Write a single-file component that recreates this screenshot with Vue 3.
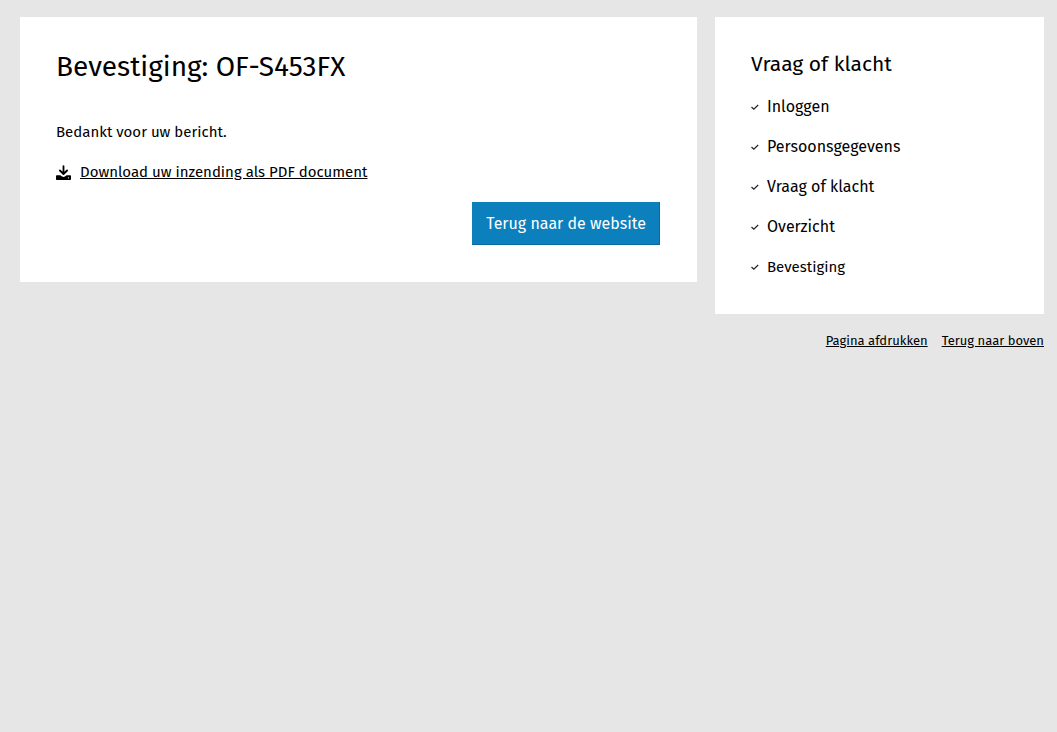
<script setup>
const steps = [
  { label: 'Inloggen' },
  { label: 'Persoonsgegevens' },
  { label: 'Vraag of klacht' },
  { label: 'Overzicht' },
  { label: 'Bevestiging', current: true },
]
</script>

<template>
  <div class="page">
    <main class="card">
      <h1 class="title">Bevestiging: OF-S453FX</h1>
      <p class="message">Bedankt voor uw bericht.</p>
      <div class="download">
        <svg class="download-icon" viewBox="0 0 15 15" aria-hidden="true">
          <path d="M7.5 1.200v7.200M3.900 5.500l3.600 3.500 3.600-3.500" fill="none" stroke="#000" stroke-width="1.800" stroke-linecap="round" stroke-linejoin="round" />
          <path d="M1 10.200h3.300l1.800 1.300c.9.600 1.900.6 2.800 0l1.800-1.300H14c.6 0 1 .4 1 1V14c0 .6-.4 1-1 1H1c-.6 0-1-.4-1-1v-2.800c0-.6.4-1 1-1z" />
          <circle cx="12.500" cy="12.800" r=".6" fill="#fff" />
        </svg>
        <a href="#" class="link">Download uw inzending als PDF document</a>
      </div>
      <div class="actions">
        <button type="button" class="button">Terug naar de website</button>
      </div>
    </main>

    <div class="side">
      <aside class="card">
        <h2 class="side-title">Vraag of klacht</h2>
        <ol class="steps">
          <li v-for="step in steps" :key="step.label" class="step" :class="{ current: step.current }">
            <svg class="check" viewBox="0 0 8 8" aria-hidden="true">
              <path d="M.5 4 2.800 6.200 7.200 2" fill="none" stroke="#222" stroke-width="1.200" />
            </svg>
            <span>{{ step.label }}</span>
          </li>
        </ol>
      </aside>
      <nav class="tools">
        <a href="#" class="link">Pagina afdrukken</a>
        <a href="#" class="link">Terug naar boven</a>
      </nav>
    </div>
  </div>
</template>

<style>
body {
  background: #e6e6e6;
}
</style>

<style scoped>
.page {
  display: grid;
  grid-template-columns: 677fr 329fr;
  align-items: start;
  gap: 18px;
  padding: 17px 13px 17px 20px;
  font-family: "Fira Sans", "Noto Sans", sans-serif;
  font-size: 15px;
  line-height: 20px;
  color: #000;
}

.card {
  padding: 36px 37px 37px 36px;
  background: #fff;
}

.title {
  margin: 0 0 41px;
  font-size: 28px;
  font-weight: 400;
  line-height: 28px;
}

.message {
  margin: 0 0 20px;
}

.download {
  display: flex;
  align-items: center;
  gap: 9px;
  margin-bottom: 20px;
}

.download-icon {
  flex: none;
  width: 15px;
  height: 15px;
}

.link {
  color: inherit;
  text-decoration: underline;
}

.actions {
  display: flex;
  justify-content: flex-end;
}

.button {
  padding: 10px 13px;
  border: 1px solid #0b80bc;
  border-right-color: #09679a;
  border-bottom-color: #09679a;
  border-radius: 0;
  background: #0b80bc;
  color: #fff;
  font-family: inherit;
  font-size: 16px;
  line-height: 21px;
  cursor: pointer;
}

.side-title {
  margin: 0 0 22px;
  font-size: 21px;
  font-weight: 400;
  line-height: 22px;
}

.steps {
  display: grid;
  gap: 20px;
  margin: 0;
  padding: 0;
  list-style: none;
}

.step {
  display: flex;
  align-items: center;
  gap: 8px;
  font-size: 16px;
}

.step.current {
  font-size: 15px;
}

.check {
  flex: none;
  width: 8px;
  height: 8px;
}

.tools {
  display: flex;
  flex-wrap: wrap;
  justify-content: flex-end;
  gap: 14px;
  margin-top: 17px;
  font-size: 13px;
}
</style>
